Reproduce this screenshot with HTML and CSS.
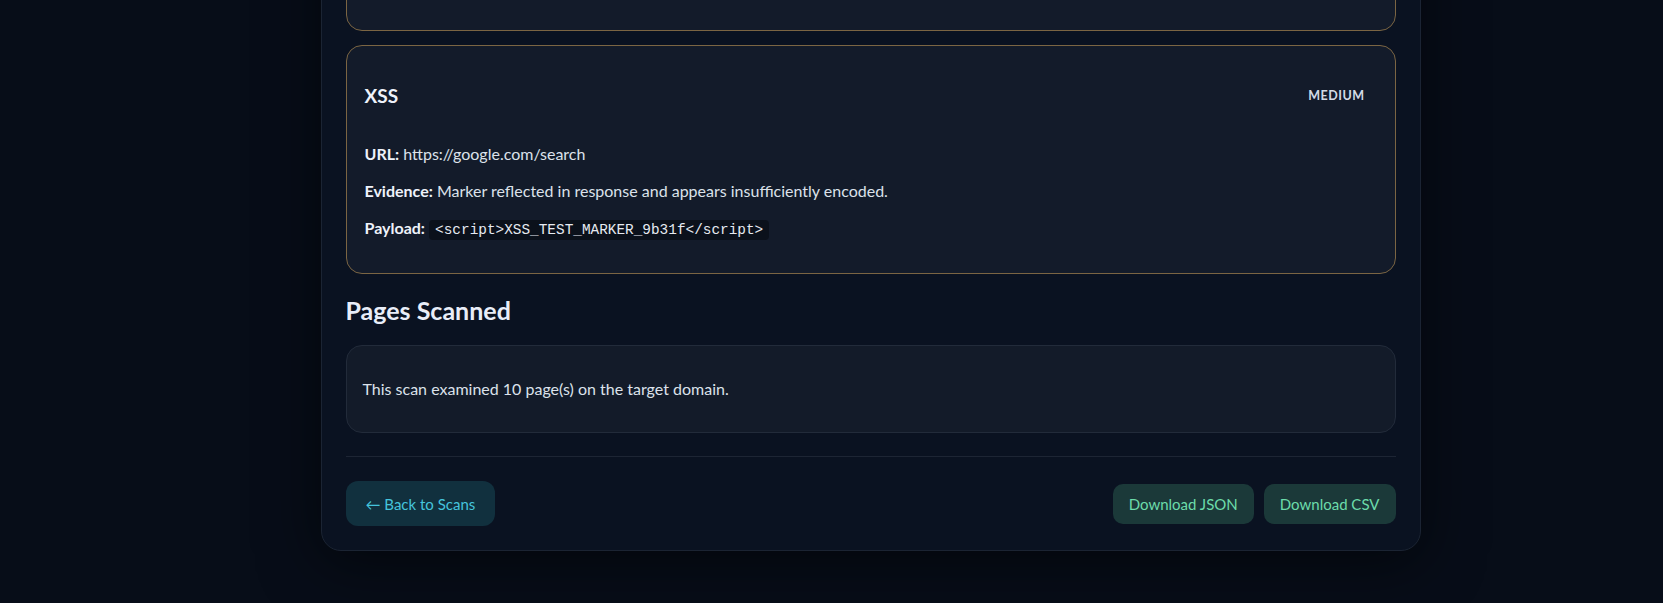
FILE: index.html
```html
<!DOCTYPE html>
<html lang="en">
<head>
  <meta charset="UTF-8"/>
  <meta name="viewport" content="width=device-width,initial-scale=1"/>
  <title>Scan Report</title>
  <link rel="stylesheet" href="styles.css">
</head>
<body>
  <div class="page">
    <div class="report">

      <!-- FINDINGS -->
      <div class="finding">
        <div class="finding-head">
          <h3>XSS</h3>
          <span class="badge">Medium</span>
        </div>
        <p><strong>URL:</strong> https://google.com/</p>
        <p><strong>Evidence:</strong> Marker reflected in response and appears insufficiently encoded.</p>
        <p><strong>Payload:</strong> <code>&quot;&gt;&lt;svg onload=XSS_TEST_MARKER_4a7c2&gt;</code></p>
      </div>

      <div class="finding">
        <div class="finding-head">
          <h3>XSS</h3>
          <span class="badge">Medium</span>
        </div>
        <p><strong>URL:</strong> https://google.com/search</p>
        <p><strong>Evidence:</strong> Marker reflected in response and appears insufficiently encoded.</p>
        <p><strong>Payload:</strong> <code>&lt;script&gt;XSS_TEST_MARKER_9b31f&lt;/script&gt;</code></p>
      </div>

      <!-- PAGES -->
      <h2>Pages Scanned</h2>
      <div class="info">
        <p>This scan examined 10 page(s) on the target domain.</p>
      </div>

      <div class="footer">
        <button class="btn back" onclick="location.href='index.html'">← Back to Scans</button>
        <div class="downloads">
          <button class="btn dl">Download JSON</button>
          <button class="btn dl">Download CSV</button>
        </div>
      </div>
    </div>
  </div>
</body>
</html>
```

FILE: styles.css
```css
html, body { margin:0; height:100%; overflow:hidden; }
body {
  font-family:"Lato", "Noto Sans", sans-serif;
  font-size:16px;
  background:#070d18;
  color:#dce2eb;
}
.page { padding-left:78px; }
.report {
  width:1100px; box-sizing:border-box;
  margin:-223px auto 54px;
  padding:24px;
  background:#0a1221;
  border:1px solid #1b2433;
  border-radius:20px;
  box-shadow:0 10px 60px rgba(0,0,0,.55);
}
.finding {
  background:#131b2a;
  border:1px solid #7b6543;
  border-radius:16px;
  padding:18px;
  margin-bottom:14px;
}
.finding-head {
  display:flex; align-items:center; justify-content:space-between;
  margin-bottom:15px;
}
.finding h3 { margin:18px 0; font-size:19px; line-height:27px; color:#eef2fa; }
.badge {
  padding:4px 12px; border-radius:999px;
  font-size:12.5px; font-weight:700; letter-spacing:.5px;
  text-transform:uppercase; color:#d3dae6;
}
.finding p { margin:0 0 13px; line-height:24px; }
.finding strong { color:#eef2fa; }
code {
  font-family:"Liberation Mono", monospace;
  font-size:14.4px;
  background:#0b111b;
  color:#e6eaf1;
  padding:2px 6px;
  border-radius:4px;
}
h2 { margin:21px 0 20px; font-size:25px; line-height:30px; color:#e8edf8; }
.info {
  background:#131b29;
  border:1px solid #222b3a;
  border-radius:16px;
  padding:16px;
}
.info p { margin:0; padding:15px 0; line-height:24px; }
.footer {
  display:flex; align-items:center; justify-content:space-between;
  margin-top:23px; padding-top:24px;
  border-top:1px solid #1d2534;
}
.btn {
  font-family:inherit; font-size:15px;
  border:none; cursor:pointer;
}
.back {
  height:45px; padding:0 20px;
  border-radius:12px;
  background:#11303e; color:#45c4dc;
}
.downloads { display:flex; gap:10px; }
.dl {
  height:40px; padding:0 16px;
  border-radius:10px;
  background:#1b3939; color:#6cdcaa;
}
```
